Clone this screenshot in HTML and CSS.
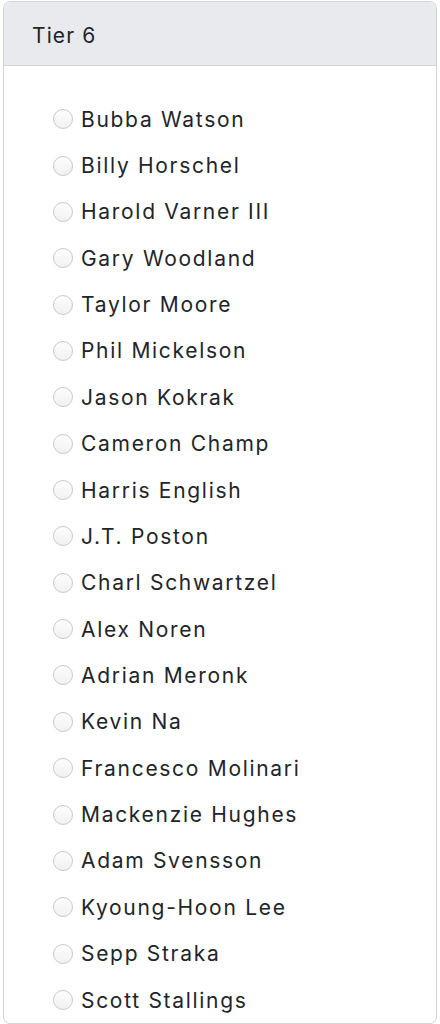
FILE: index.html
```html
<!DOCTYPE html>
<html>
<head>
<meta charset="utf-8">
<link rel="stylesheet" href="styles.css">
</head>
<body>
<div class="card">
  <div class="card-header">Tier 6</div>
  <div class="card-body">
    <label class="opt"><span class="radio"></span><span class="name">Bubba Watson</span></label>
    <label class="opt"><span class="radio"></span><span class="name">Billy Horschel</span></label>
    <label class="opt"><span class="radio"></span><span class="name">Harold Varner III</span></label>
    <label class="opt"><span class="radio"></span><span class="name">Gary Woodland</span></label>
    <label class="opt"><span class="radio"></span><span class="name">Taylor Moore</span></label>
    <label class="opt"><span class="radio"></span><span class="name">Phil Mickelson</span></label>
    <label class="opt"><span class="radio"></span><span class="name">Jason Kokrak</span></label>
    <label class="opt"><span class="radio"></span><span class="name">Cameron Champ</span></label>
    <label class="opt"><span class="radio"></span><span class="name">Harris English</span></label>
    <label class="opt"><span class="radio"></span><span class="name">J.T. Poston</span></label>
    <label class="opt"><span class="radio"></span><span class="name">Charl Schwartzel</span></label>
    <label class="opt"><span class="radio"></span><span class="name">Alex Noren</span></label>
    <label class="opt"><span class="radio"></span><span class="name">Adrian Meronk</span></label>
    <label class="opt"><span class="radio"></span><span class="name">Kevin Na</span></label>
    <label class="opt"><span class="radio"></span><span class="name">Francesco Molinari</span></label>
    <label class="opt"><span class="radio"></span><span class="name">Mackenzie Hughes</span></label>
    <label class="opt"><span class="radio"></span><span class="name">Adam Svensson</span></label>
    <label class="opt"><span class="radio"></span><span class="name">Kyoung-Hoon Lee</span></label>
    <label class="opt"><span class="radio"></span><span class="name">Sepp Straka</span></label>
    <label class="opt"><span class="radio"></span><span class="name">Scott Stallings</span></label>
  </div>
</div>
</body>
</html>
```
FILE: styles.css
```css
html, body {
  margin: 0;
  padding: 0;
  background: #ffffff;
}
body {
  font-family: Inter, "Noto Sans", sans-serif;
  color: #212529;
  padding: 1px 3px 0 3px;
}
.card {
  border: 1px solid #d3d4d6;
  border-radius: 7px;
  overflow: hidden;
  background: #fff;
}
.card-header {
  background: #e9eaed;
  border-bottom: 1px solid #d3d4d6;
  height: 64px;
  box-sizing: border-box;
  padding: 3px 28px 0;
  display: flex;
  align-items: center;
  font-size: 21px;
  letter-spacing: 1.1px;
}
.card-body {
  padding: 30px 0 0 49px;
  display: flex;
  flex-direction: column;
}
.opt {
  display: flex;
  align-items: center;
  height: 46.37px;
  font-size: 21px;
  letter-spacing: 1.7px;
}
.radio {
  width: 20px;
  height: 20px;
  border-radius: 50%;
  border: 1px solid #c9c9c9;
  background: linear-gradient(#fdfdfd, #f1f1f1);
  box-sizing: border-box;
  margin-right: 8px;
  flex: none;
}
.name {
  line-height: 1;
}
```
